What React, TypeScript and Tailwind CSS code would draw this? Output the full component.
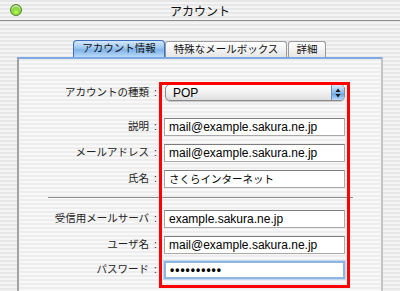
import React from 'react';

const stripeOuter =
  'bg-[repeating-linear-gradient(180deg,#e7e7e7_0px,#e7e7e7_2px,#f4f4f4_2px,#f4f4f4_4px)]';

interface FieldRowProps {
  label: string;
  value: string;
  latin?: boolean;
  focused?: boolean;
  className?: string;
}

const Label: React.FC<{ text: string }> = ({ text }) => (
  <div className="w-[139px] flex justify-end items-center text-[10.5px] text-[#222] whitespace-nowrap">
    <span>{text}</span>
    <span className="ml-[5px] pr-[1px]">:</span>
  </div>
);

const FieldRow: React.FC<FieldRowProps> = ({ label, value, latin = true, focused, className }) => {
  return (
    <div className={`flex items-center h-[18px] ${className ?? ''}`}>
      <Label text={label} />
      <div
        className={`ml-[6px] w-[181px] h-[18px] bg-white flex items-center pl-[4px] ${
          focused
            ? 'border-2 border-[#8fb4e0] shadow-[0_0_0_1px_#c3d8f2]'
            : 'border border-[#a9a9a9] border-t-[#7c7c7c]'
        }`}
      >
        <span
          className={`${latin ? 'text-[12px]' : 'text-[10.5px]'} text-black leading-none whitespace-nowrap ${
            focused ? 'tracking-[1px] font-bold text-[10px]' : ''
          }`}
        >
          {value}
        </span>
      </div>
    </div>
  );
};

const App: React.FC = () => {
  return (
    <div
      className={`relative w-[400px] h-[291px] overflow-hidden ${stripeOuter} font-['Liberation_Sans','Noto_Sans_CJK_JP',sans-serif] text-black`}
    >
      {/* title bar */}
      <div className="h-[21px] grid grid-cols-[1fr_auto_1fr] items-center border-b border-[#8e8e8e]">
        <div className="flex items-center pl-[10px]">
          <div className="w-[12px] h-[12px] rounded-full border border-[#4e8a1c] bg-[radial-gradient(circle_at_50%_70%,#c8f56a_0%,#7fd12a_45%,#3f8f10_100%)] shadow-[inset_0_2px_2px_rgba(255,255,255,0.7)]" />
        </div>
        <div className="text-[12px] text-[#111] font-['Noto_Sans_CJK_JP',sans-serif] leading-none pt-[1px]">アカウント</div>
        <div />
      </div>

      {/* ghosted toolbar */}
      <div className="h-[19px]" />

      {/* tabs */}
      <div className="flex pl-[73px] h-[17px] items-end">
        <div className="w-[92px] h-[17px] rounded-t-[4px] border border-b-0 border-[#3c6fc0] bg-[linear-gradient(180deg,#d5e8fb_0%,#9cc6f1_45%,#7fb3ea_55%,#b9daf8_100%)] flex items-center justify-center text-[10.5px] text-[#111]">
          アカウント情報
        </div>
        <div className="w-[122px] h-[16px] rounded-t-[3px] border border-b-0 border-[#9a9a9a] bg-[linear-gradient(180deg,#ffffff_0%,#f3f3f3_50%,#e6e6e6_100%)] flex items-center justify-center text-[10.5px] text-[#111]">
          特殊なメールボックス
        </div>
        <div className="w-[38px] h-[16px] ml-[1px] rounded-t-[3px] border border-b-0 border-[#9a9a9a] bg-[linear-gradient(180deg,#ffffff_0%,#f3f3f3_50%,#e6e6e6_100%)] flex items-center justify-center text-[10.5px] text-[#111]">
          詳細
        </div>
      </div>

      {/* panel */}
      <div className="ml-[17px] w-[366px] h-[240px] border-l-2 border-r-2 border-l-[#a3a3a3] border-r-[#c4c4c4] border-t-2 border-t-[#7fa9e4] bg-[repeating-linear-gradient(180deg,#ededed_0px,#ededed_2px,#f8f8f8_2px,#f8f8f8_4px)] pt-[25px]">
        {/* account type */}
        <div className="flex items-center h-[17px]">
          <Label text="アカウントの種類" />
          <div className="ml-[7px] w-[180px] h-[17px] rounded-[5px] border border-[#8a8a8a] bg-[linear-gradient(180deg,#ffffff_0%,#f1f1f1_50%,#dedede_100%)] flex items-center overflow-hidden shadow-[0_1px_1px_rgba(0,0,0,0.2)]">
            <span className="flex-1 pl-[7px] text-[12px] leading-none">POP</span>
            <div className="w-[13px] h-full border-l border-[#6f8fbf] bg-[linear-gradient(180deg,#d9ebfc_0%,#8dbdee_50%,#6aa6e6_60%,#b8dafa_100%)] flex items-center justify-center">
              <svg width="6" height="10" viewBox="0 0 6 10">
                <path d="M3 0.5 L5.5 4 L0.5 4 Z" fill="#1a1a1a" />
                <path d="M3 9.5 L5.5 6 L0.5 6 Z" fill="#1a1a1a" />
              </svg>
            </div>
          </div>
        </div>

        <FieldRow className="mt-[17px]" label="説明" value="mail@example.sakura.ne.jp" />
        <FieldRow className="mt-[8px]" label="メールアドレス" value="mail@example.sakura.ne.jp" />
        <FieldRow className="mt-[8px]" label="氏名" value="さくらインターネット" latin={false} />

        <div className="ml-[29px] w-[305px] mt-[9px] h-[2px] border-t border-[#8c8c8c] border-b border-b-[#ffffff]" />

        <FieldRow className="mt-[11px]" label="受信用メールサーバ" value="example.sakura.ne.jp" />
        <FieldRow className="mt-[8px]" label="ユーザ名" value="mail@example.sakura.ne.jp" />
        <FieldRow className="mt-[7px]" label="パスワード" value="••••••••••" focused />
      </div>

      {/* red annotation */}
      <div className="absolute left-[159px] top-[82px] w-[191px] h-[206px] border-[3px] border-[#ff0000] pointer-events-none" />
    </div>
  );
};

export default App;
